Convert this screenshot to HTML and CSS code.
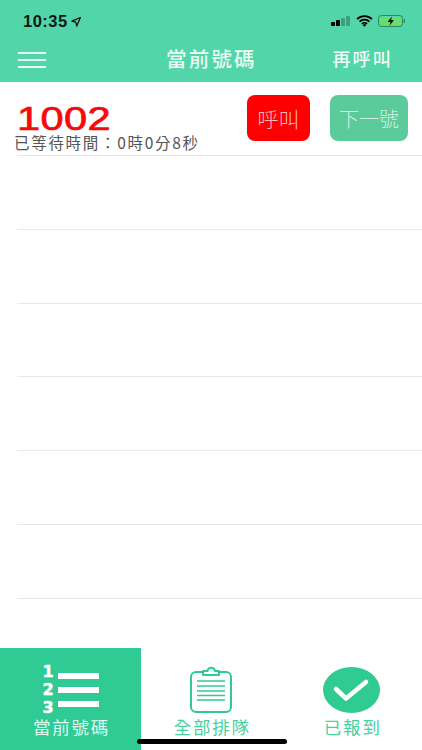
FILE: index.html
```html
<!DOCTYPE html>
<html lang="zh-Hant">
<head>
<meta charset="utf-8">
<title>當前號碼</title>
<link rel="stylesheet" href="styles.css">
</head>
<body>
<div class="app">
  <header class="head">
    <div class="status">
      <div class="status-left">
        <span class="time">10:35</span>
        <svg class="loc" width="10" height="10" viewBox="0 0 9 9"><path d="M8.500.5 .8 3.700l3.500.9.9 3.600z" fill="none" stroke="#111" stroke-width="1.100" stroke-linejoin="round"/></svg>
      </div>
      <div class="status-right">
        <svg width="20" height="10" viewBox="0 0 20 10"><rect x="0" y="6" width="4" height="4" rx=".7" fill="#000"/><rect x="5" y="4" width="4" height="6" rx=".7" fill="#000"/><rect x="10" y="2" width="4" height="8" rx=".7" fill="#3f9d80"/><rect x="15" y="0" width="4" height="10" rx=".7" fill="#3f9d80"/></svg>
        <svg width="17" height="12" viewBox="0 0 16 11"><path d="M1 3.800a10 10 0 0 1 14 0M3.300 6.100a6.800 6.800 0 0 1 9.400 0M5.600 8.200a3.400 3.400 0 0 1 4.800 0" fill="none" stroke="#000" stroke-width="1.600"/><path d="M8 11 6.400 9.200a2.300 2.300 0 0 1 3.200 0z" fill="#000"/></svg>
        <svg width="28" height="12" viewBox="0 0 28 12"><rect x=".5" y=".5" width="24" height="11" rx="3" fill="none" stroke="#2a8a66"/><rect x="2" y="2" width="21" height="8" rx="1.600" fill="#67e06b"/><rect x="25.600" y="4" width="1.400" height="4" rx=".7" fill="#2a8a66"/><path d="M14 1.500 9.500 7h3l-1 3.800L16 5h-3z" fill="#000"/></svg>
      </div>
    </div>
    <nav class="nav">
      <div class="burger"><i></i><i></i><i></i></div>
      <h1 class="title">當前號碼</h1>
      <span class="recall">再呼叫</span>
    </nav>
  </header>

  <main class="list">
    <section class="current">
      <div class="info">
        <div class="number">1002</div>
        <div class="wait">已等待時間：0時0分8秒</div>
      </div>
      <div class="actions">
        <button class="btn btn-call">呼叫</button>
        <button class="btn btn-next">下一號</button>
      </div>
    </section>
    <div class="row"></div>
    <div class="row"></div>
    <div class="row"></div>
    <div class="row"></div>
    <div class="row"></div>
    <div class="row"></div>
  </main>

  <footer class="tabs">
    <div class="tab tab-active">
      <div class="tab-icon">
        <div class="nums"><span>1</span><span>2</span><span>3</span></div>
        <div class="bars"><i></i><i></i><i></i></div>
      </div>
      <span class="tab-label">當前號碼</span>
    </div>
    <div class="tab">
      <svg class="tab-svg" width="44" height="47" viewBox="0 0 44 47"><rect x="2" y="6" width="40" height="40" rx="5" fill="none" stroke="#2fcb93" stroke-width="2"/><path d="M14 9V5h4.500a3.800 3.800 0 0 1 7.500 0h4v4z" fill="#fff" stroke="#2fcb93" stroke-width="2" stroke-linejoin="round"/><path d="M8 15h28M8 20h28M8 25h28M8 29.500h28M8 34h28" stroke="#2fcb93" stroke-width="1.600"/></svg>
      <span class="tab-label tab-label-green">全部排隊</span>
    </div>
    <div class="tab">
      <svg class="tab-svg" width="57" height="46" viewBox="0 0 57 46"><ellipse cx="28.500" cy="23" rx="28.500" ry="23" fill="#2fcb93"/><path d="M13 22l10 9.500L43 15" fill="none" stroke="#fff" stroke-width="4.500" stroke-linecap="round" stroke-linejoin="round"/></svg>
      <span class="tab-label tab-label-green">已報到</span>
    </div>
    <div class="home"></div>
  </footer>
</div>
</body>
</html>
```
FILE: styles.css
```css
* { box-sizing: border-box; }
html, body { margin: 0; padding: 0; }
body { font-family: "Liberation Sans", "Noto Sans CJK TC", sans-serif; background: #fff; }
.app { position: relative; width: 422px; height: 750px; display: flex; flex-direction: column; overflow: hidden; }

.head { height: 82px; background: #52d5a8; flex: none; display: flex; flex-direction: column; }
.status { height: 44px; padding: 13px 16px 0 23px; display: flex; justify-content: space-between; align-items: flex-start; }
.status-left { display: flex; align-items: center; gap: 3px; }
.time { font-size: 16.500px; font-weight: 700; line-height: 17px; color: #0c1a15; letter-spacing: .5px; }
.status-right { display: flex; align-items: center; gap: 5px; padding-top: 2px; }
.nav { flex: 1; display: flex; align-items: center; padding: 0 31px 6px 18px; position: relative; justify-content: space-between; }
.burger { width: 28px; display: flex; flex-direction: column; gap: 5px; }
.burger i { display: block; height: 2px; background: #e9fbf4; }
.title { margin: 0; font-size: 20.500px; font-weight: 500; color: #e9fbf4; letter-spacing: 2.200px; position: absolute; left: 166px; line-height: 24px; }
.recall { font-size: 18px; font-weight: 500; color: #f0fcf7; letter-spacing: 2.200px; line-height: 24px; margin-right: -2px; }

.list { flex: 1; padding-left: 17px; display: flex; flex-direction: column; }
.current { height: 74px; display: flex; justify-content: space-between; align-items: flex-start; border-bottom: 1px solid #e8e8e8; }
.info { padding-top: 22px; }
.number { font-size: 33px; line-height: 30px; color: #f40a0a; letter-spacing: .3px; -webkit-text-stroke: .7px #f40a0a; font-family: "Liberation Sans", sans-serif; transform: scaleX(1.26); transform-origin: left; }
.wait { font-size: 15.500px; line-height: 18px; color: #555; margin-left: -3px; font-family: "Noto Sans CJK TC", sans-serif; margin-top: -1px; letter-spacing: 1.700px; }
.actions { display: flex; gap: 20px; padding: 13px 14px 0 0; }
.btn { height: 46px; border: 0; border-radius: 8px; color: #ffffffb8; font-family: "Noto Sans CJK TC", sans-serif; font-weight: 300; padding: 0; }
.btn-call { width: 63px; background: #fe0000; font-size: 21px; }
.btn-next { width: 78px; background: #5ccb9c; font-size: 20px; }
.row { height: 73.800px; border-bottom: 1px solid #e8e8e8; flex: none; }

.tabs { height: 102px; flex: none; display: flex; position: relative; }
.tab { flex: 1; display: flex; flex-direction: column; align-items: center; justify-content: flex-end; padding-bottom: 13px; }
.tab-active { background: #30cb94; flex: none; width: 141px; }
.tab-icon { display: flex; gap: 4px; }
.nums { display: flex; flex-direction: column; align-items: center; font-size: 16px; line-height: 18px; font-weight: 700; color: #fff; -webkit-text-stroke: .5px #fff; font-family: "DejaVu Sans", sans-serif; }
.bars { display: flex; flex-direction: column; gap: 8px; padding-top: 10px; }
.bars i { display: block; width: 41px; height: 6px; background: #fff; }
.tab-label { font-size: 17.500px; line-height: 20px; color: #dff8ee; letter-spacing: 1.800px; margin-right: -2px; font-family: "Noto Sans CJK TC", sans-serif; }
.tab-label-green { color: #4ccf9f; }
.tab-svg { margin-bottom: 4px; display: block; }
.home { position: absolute; left: 137px; bottom: 6px; width: 150px; height: 5px; border-radius: 3px; background: #000; }
```
